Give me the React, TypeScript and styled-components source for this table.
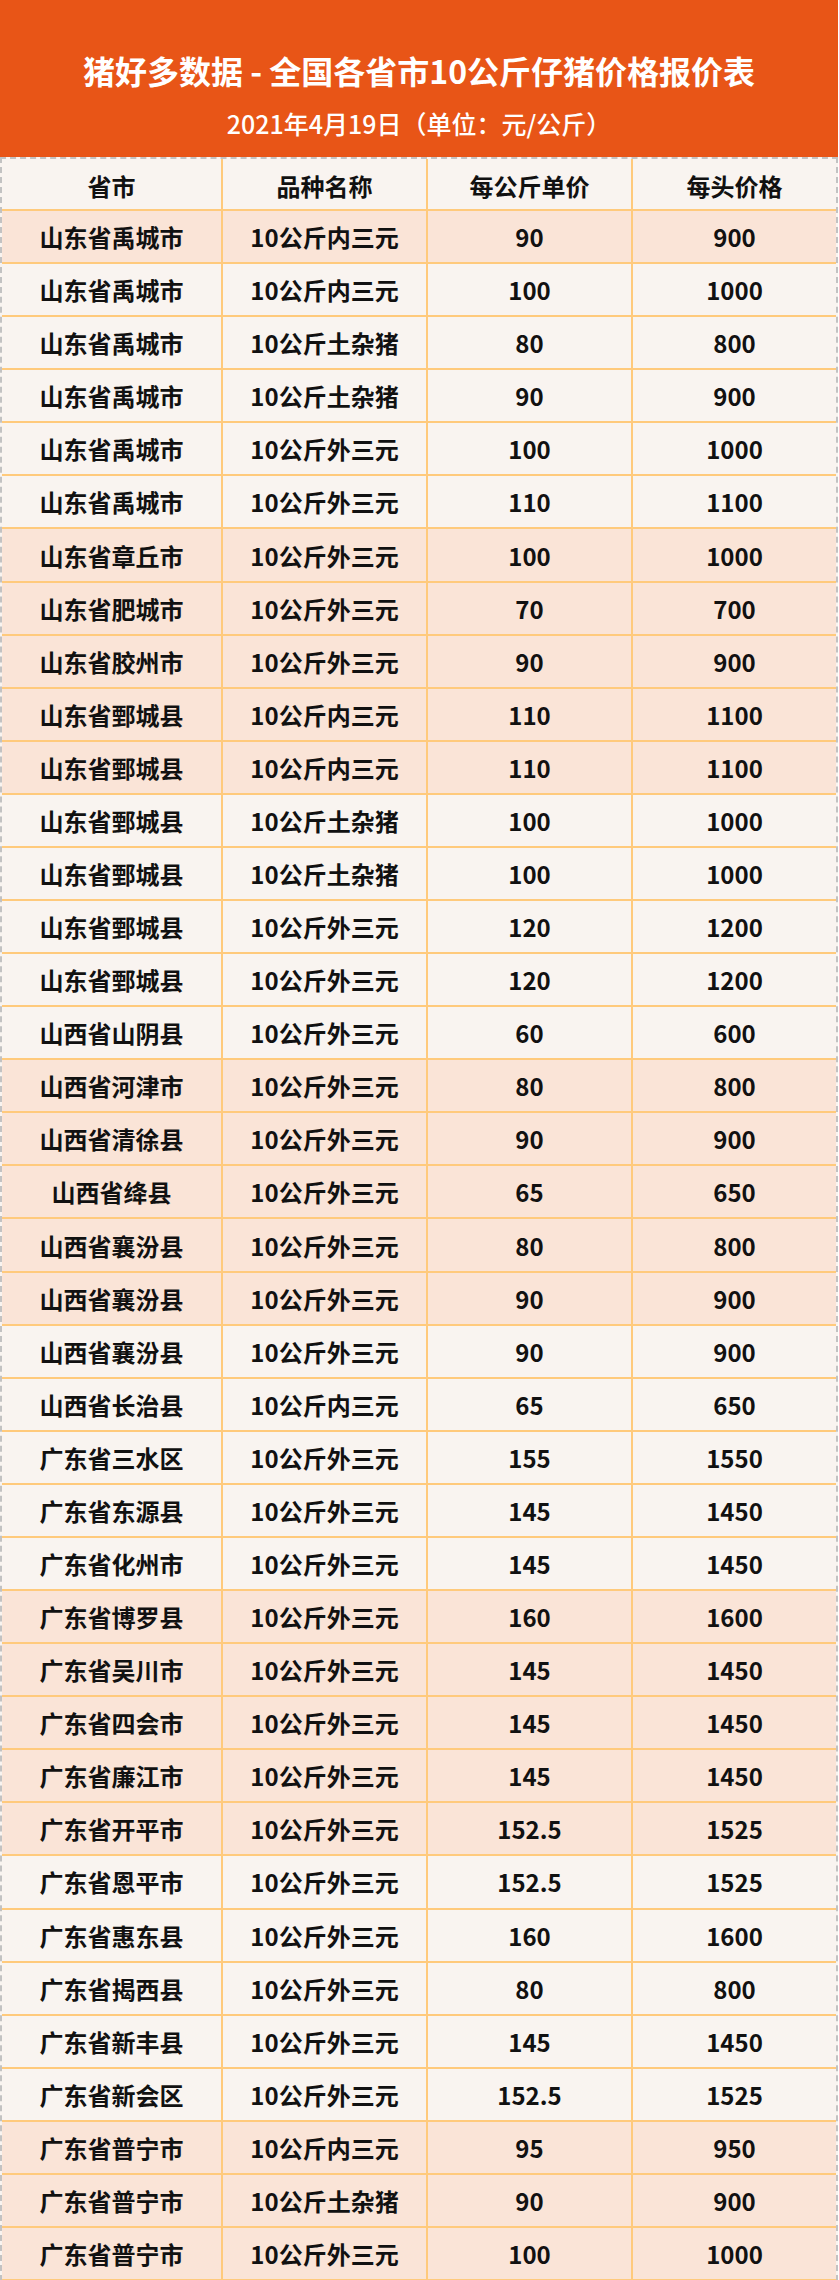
import React from 'react'
import styled, { createGlobalStyle } from 'styled-components'

const GlobalStyle = createGlobalStyle`
  body {
    margin: 0;
    background: #ffffff;
    font-family: 'Noto Sans CJK SC', 'Noto Sans', sans-serif;
  }
`

type Row = [string, string, string, string]

const rows: Row[] = [
  ['山东省禹城市', '10公斤内三元', '90', '900'],
  ['山东省禹城市', '10公斤内三元', '100', '1000'],
  ['山东省禹城市', '10公斤土杂猪', '80', '800'],
  ['山东省禹城市', '10公斤土杂猪', '90', '900'],
  ['山东省禹城市', '10公斤外三元', '100', '1000'],
  ['山东省禹城市', '10公斤外三元', '110', '1100'],
  ['山东省章丘市', '10公斤外三元', '100', '1000'],
  ['山东省肥城市', '10公斤外三元', '70', '700'],
  ['山东省胶州市', '10公斤外三元', '90', '900'],
  ['山东省鄄城县', '10公斤内三元', '110', '1100'],
  ['山东省鄄城县', '10公斤内三元', '110', '1100'],
  ['山东省鄄城县', '10公斤土杂猪', '100', '1000'],
  ['山东省鄄城县', '10公斤土杂猪', '100', '1000'],
  ['山东省鄄城县', '10公斤外三元', '120', '1200'],
  ['山东省鄄城县', '10公斤外三元', '120', '1200'],
  ['山西省山阴县', '10公斤外三元', '60', '600'],
  ['山西省河津市', '10公斤外三元', '80', '800'],
  ['山西省清徐县', '10公斤外三元', '90', '900'],
  ['山西省绛县', '10公斤外三元', '65', '650'],
  ['山西省襄汾县', '10公斤外三元', '80', '800'],
  ['山西省襄汾县', '10公斤外三元', '90', '900'],
  ['山西省襄汾县', '10公斤外三元', '90', '900'],
  ['山西省长治县', '10公斤内三元', '65', '650'],
  ['广东省三水区', '10公斤外三元', '155', '1550'],
  ['广东省东源县', '10公斤外三元', '145', '1450'],
  ['广东省化州市', '10公斤外三元', '145', '1450'],
  ['广东省博罗县', '10公斤外三元', '160', '1600'],
  ['广东省吴川市', '10公斤外三元', '145', '1450'],
  ['广东省四会市', '10公斤外三元', '145', '1450'],
  ['广东省廉江市', '10公斤外三元', '145', '1450'],
  ['广东省开平市', '10公斤外三元', '152.5', '1525'],
  ['广东省恩平市', '10公斤外三元', '152.5', '1525'],
  ['广东省惠东县', '10公斤外三元', '160', '1600'],
  ['广东省揭西县', '10公斤外三元', '80', '800'],
  ['广东省新丰县', '10公斤外三元', '145', '1450'],
  ['广东省新会区', '10公斤外三元', '152.5', '1525'],
  ['广东省普宁市', '10公斤内三元', '95', '950'],
  ['广东省普宁市', '10公斤土杂猪', '90', '900'],
  ['广东省普宁市', '10公斤外三元', '100', '1000'],
]

const headings = ['省市', '品种名称', '每公斤单价', '每头价格']

const Page = styled.div`
  width: 838px;
`

const Banner = styled.header`
  height: 157px;
  box-sizing: border-box;
  padding-top: 51px;
  background: #e85517;
  color: #ffffff;
  display: flex;
  flex-direction: column;
  align-items: center;
  gap: 19px;
`

const Title = styled.h1`
  margin: 0;
  font-size: 32px;
  line-height: 38px;
  font-weight: 700;
`

const Subtitle = styled.div`
  font-size: 25px;
  line-height: 30px;
  font-weight: 500;
`

const Grid = styled.div`
  display: grid;
  grid-template-columns: 221px 205px 205px 1fr;
  grid-template-rows: 52px;
  grid-auto-rows: 53.08px;
  border-top: 2px dashed #c2c2c2;
  border-left: 2px dashed #c2c2c2;
  border-right: 2px dashed #c2c2c2;
  background: #f9f4f0;
`

const Cell = styled.div<{ $pink?: boolean; $last?: boolean }>`
  display: flex;
  align-items: center;
  justify-content: center;
  box-sizing: border-box;
  background: ${(p) => (p.$pink ? '#fae4d7' : '#f9f4f0')};
  border-bottom: 2px solid #ffca7c;
  border-right: ${(p) => (p.$last ? 'none' : '2px solid #ffca7c')};
  color: #111111;
  font-size: 24px;
  font-weight: 700;
  white-space: nowrap;
`

const HeadCell = styled(Cell)`
  padding-top: 2px;
`

// rows come in bands of five, first row is highlighted on its own
const isPink = (i: number) => Math.abs(Math.floor((i - 1) / 5)) % 2 === 1

const App: React.FC = () => (
  <Page>
    <GlobalStyle />
    <Banner>
      <Title>猪好多数据 - 全国各省市10公斤仔猪价格报价表</Title>
      <Subtitle>2021年4月19日（单位：元/公斤）</Subtitle>
    </Banner>
    <Grid>
      {headings.map((h, c) => (
        <HeadCell key={h} $last={c === 3}>
          {h}
        </HeadCell>
      ))}
      {rows.map((row, i) =>
        row.map((value, c) => (
          <Cell key={`${i}-${c}`} $pink={isPink(i)} $last={c === 3}>
            {value}
          </Cell>
        )),
      )}
    </Grid>
  </Page>
)

export default App
